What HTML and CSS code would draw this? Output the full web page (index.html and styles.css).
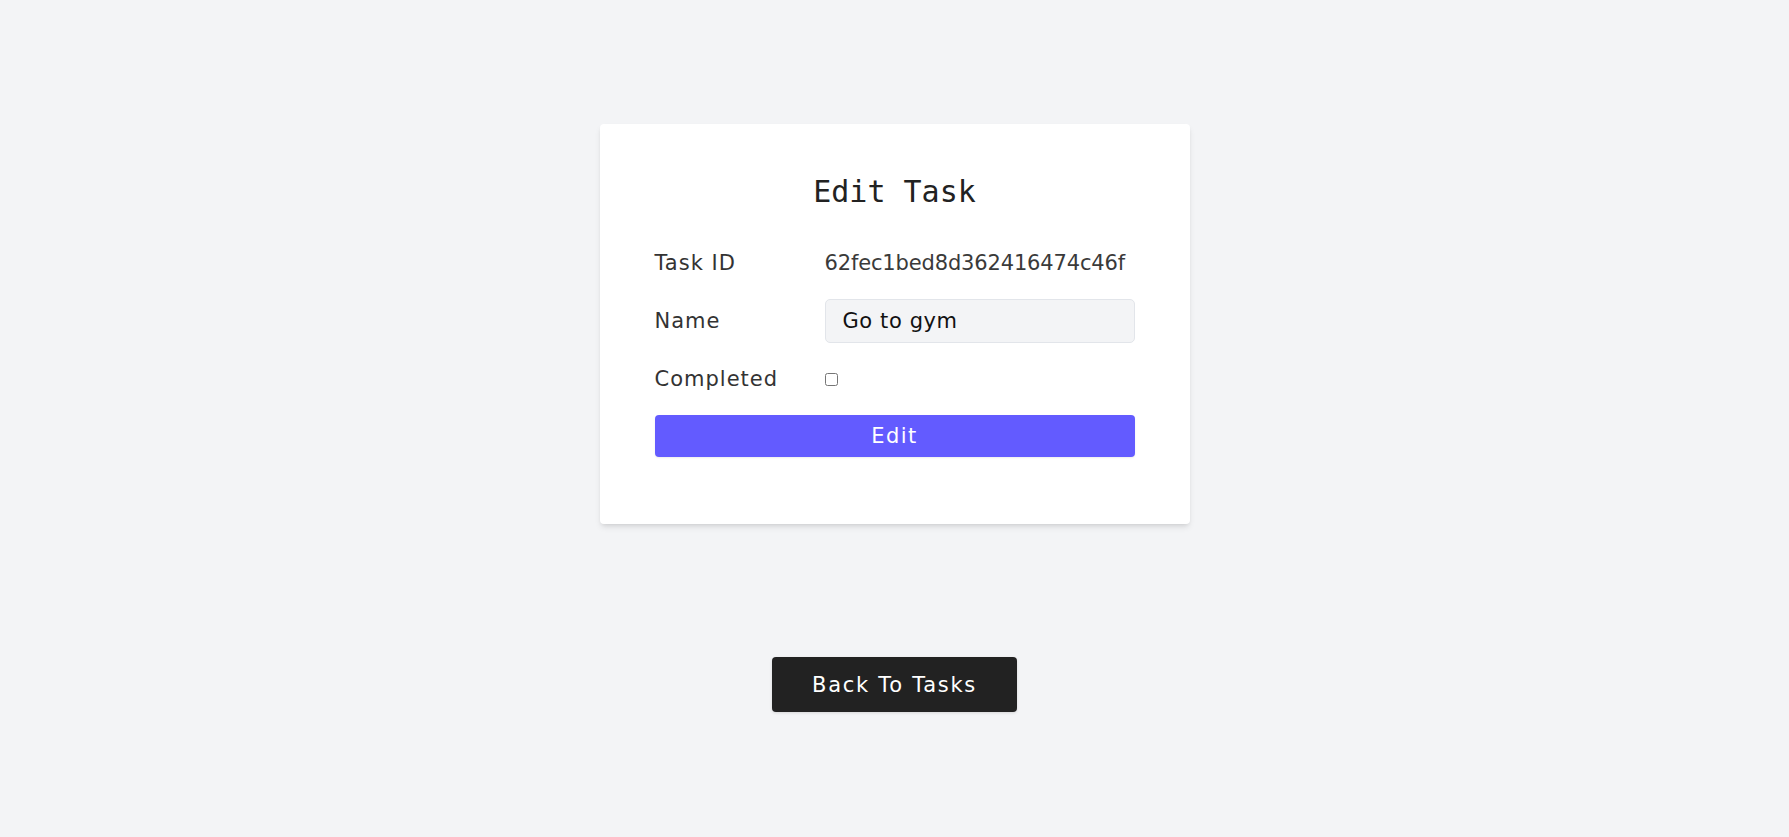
FILE: index.html
```html
<!DOCTYPE html>
<html lang="en">
<head>
<meta charset="utf-8">
<title>Edit Task</title>
<link rel="stylesheet" href="styles.css">
</head>
<body>
<main class="page">
  <form class="card">
    <h4 class="title">Edit Task</h4>
    <div class="row">
      <span class="label">Task ID</span>
      <span class="value">62fec1bed8d362416474c46f</span>
    </div>
    <div class="row">
      <label class="label" for="name">Name</label>
      <input class="input" id="name" type="text" value="Go to gym">
    </div>
    <div class="row">
      <label class="label" for="completed">Completed</label>
      <input class="check" id="completed" type="checkbox">
    </div>
    <button class="submit" type="button">Edit</button>
  </form>
  <a class="back" href="#">Back To Tasks</a>
</main>
</body>
</html>
```
FILE: styles.css
```css
* { box-sizing: border-box; }
html, body { margin: 0; padding: 0; }
body {
  background: #f3f4f6;
  font-family: "DejaVu Sans", "Noto Sans", sans-serif;
  color: #374151;
  min-height: 837px;
}
.page {
  display: flex;
  flex-direction: column;
  align-items: center;
  padding-top: 124px;
}
.card {
  width: 590px;
  background: #fff;
  border-radius: 4px;
  box-shadow: 0 4px 6px -1px rgba(0,0,0,0.1), 0 2px 4px -2px rgba(0,0,0,0.1);
  padding: 50px 55px 67px 55px;
  display: flex;
  flex-direction: column;
  gap: 14px;
  margin-bottom: 132px;
}
.title {
  margin: 0 0 17px 0;
  font-family: "DejaVu Sans Mono", "Liberation Mono", monospace;
  font-weight: 400;
  font-size: 30px;
  line-height: 36px;
  text-align: center;
  color: #222;
}
.row {
  display: flex;
  align-items: center;
  height: 44px;
}
.label {
  width: 170px;
  flex: none;
  font-size: 21px;
  letter-spacing: 1px;
  color: #333;
}
.value {
  font-size: 21px;
  letter-spacing: -0.15px;
  color: #3a3a3a;
}
.input {
  width: 310px;
  height: 44px;
  margin: 0;
  border: 1px solid #e2e5ea;
  border-radius: 5px;
  background: #f3f4f6;
  padding: 0 0 0 17px;
  font-family: "DejaVu Sans", sans-serif;
  font-size: 21px;
  letter-spacing: 0.6px;
  color: #111;
}
.check {
  width: 13px;
  height: 13px;
  margin: 1px 0 0 0;
}
.submit {
  height: 42px;
  width: 480px;
  border: 0;
  border-radius: 4px;
  background: #635bff;
  color: #fff;
  font-family: "DejaVu Sans", sans-serif;
  font-size: 21px;
  letter-spacing: 1.5px;
  padding: 0;
  box-shadow: 0 1px 2px rgba(0,0,0,0.08);
}
.back {
  display: inline-flex;
  align-items: center;
  justify-content: center;
  width: 245px;
  height: 55px;
  margin-top: 1px;
  border-radius: 4px;
  background: #222;
  color: #fff;
  text-decoration: none;
  font-size: 21px;
  letter-spacing: 1.7px;
  box-shadow: 0 1px 3px rgba(0,0,0,0.12);
}
```
